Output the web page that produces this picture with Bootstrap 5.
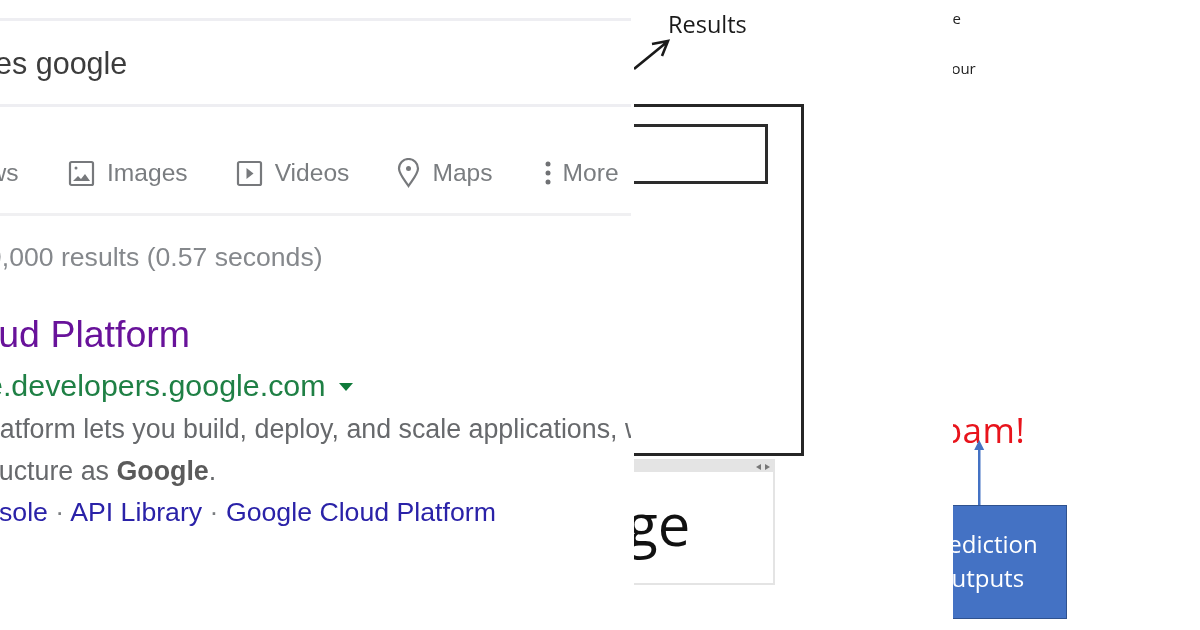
<!DOCTYPE html>
<html lang="en">
<head>
<meta charset="UTF-8">
<title>Spam prediction</title>
<link href="https://cdn.jsdelivr.net/npm/bootstrap@5.3.0/dist/css/bootstrap.min.css" rel="stylesheet">
<style>
    html, body { width: 1200px; height: 630px; overflow: hidden; background: #fff; }
    .shot { width: 631px; height: 630px; overflow: hidden; padding-top: 18px; margin-right: 3px; font-family: "Liberation Sans", Arial, sans-serif; white-space: nowrap; filter: blur(.7px); }
    .shot-line { border-top: 3px solid #eeeef2; }
    .search-row { height: 83px; line-height: 84px; font-size: 30.5px; color: #3c3c3c; margin-left: -166px; }
    .tabs-row { height: 112px; border-top: 3px solid #eeeef2; border-bottom: 3px solid #f0f0f2; color: #7a7d80; font-size: 24.6px; padding-top: 48px; }
    .tab-news { margin-left: -43px; width: 63px; }
    .tab-item { gap: 12px; }
    .tab-images { margin-left: 48px; }
    .tab-videos { margin-left: 48px; }
    .tab-maps { margin-left: 48px; }
    .tab-more { margin-left: 52px; }
    .count { margin: 27px 0 0 -13px; font-size: 26.6px; color: #85888c; line-height: 28px; }
    .res-title { margin: 41px 0 0 -58px; font-size: 37.5px; line-height: 44px; color: #68129a; }
    .res-url { margin: 11px 0 0 -14px; font-size: 30.4px; line-height: 36px; color: #1f8045; }
    .res-caret { display: inline-block; margin-left: 13px; vertical-align: 5px; border: 7px solid transparent; border-top: 8px solid #0f7a3a; border-bottom: 0; }
    .res-text { font-size: 26.8px; line-height: 42px; color: #67696c; }
    .res-text b { color: #5a5a5a; }
    .text-a { margin: 5px 0 0 -24px; }
    .text-b { margin-left: -31px; }
    .res-links { margin: 0 0 0 -50px; font-size: 26.7px; line-height: 40px; color: #2a22a8; }
    .res-links i { font-style: normal; color: #7a7d80; }

    .sketch { width: 319px; height: 630px; overflow: hidden; font-family: "Open Sans", sans-serif; filter: blur(.4px); }
    .res-label { position: absolute; left: 34px; top: 8px; font-size: 23.5px; line-height: 32px; color: #1a1a1a; }
    .sketch-arrow { position: absolute; left: 0; top: 0; }
    .outer-box { position: absolute; left: -30px; top: 104px; width: 200px; height: 352px; border: 3px solid #262626; }
    .inner-box { position: absolute; left: -30px; top: 124px; width: 164px; height: 60px; border: 3px solid #2c2c2c; }
    .msg-pane { position: absolute; left: -30px; top: 459px; width: 171px; height: 126px; border: 2px solid #e4e4e4; border-left: 0; }
    .pane-bar { height: 11px; background: #e4e4e4; padding-right: 3px; gap: 4px; }
    .pane-tri { border: 3px solid transparent; }
    .pane-left { border-right: 5px solid #777; border-left: 0; }
    .pane-right { border-left: 5px solid #777; border-right: 0; }
    .msg-word { margin-left: -150px; font-size: 58px; line-height: 104px; color: #111; white-space: nowrap; }

    .notes { width: 247px; height: 630px; overflow: hidden; font-family: "Open Sans", sans-serif; filter: blur(.3px); }
    .note { position: absolute; font-size: 15px; line-height: 20px; color: #222; white-space: nowrap; }
    .note-the { left: -15px; top: 8px; }
    .note-your { left: -10px; top: 58px; }
    .spam-word { position: absolute; left: -32px; top: 405px; font-size: 35px; line-height: 50px; color: #e8141c; white-space: nowrap; letter-spacing: .5px; }
    .pred-arrow { position: absolute; left: 18px; top: 440px; }
    .pred-box { position: absolute; left: 0; top: 505px; width: 114px; height: 114px; background: #4472c4; border: 1px solid #2f528f; border-left: 0; color: #fff; font-size: 24px; line-height: 34px; padding-top: 21px; white-space: nowrap; }
    .pred-a { margin-left: -29px; }
    .pred-b { margin-left: -16px; }
</style>
</head>
<body>
<div class="d-flex">
    <div class="shot">
        <div class="shot-line"></div>
        <div class="search-row">cloud services google</div>
        <div class="tabs-row d-flex align-items-start">
            <div class="tab-news">News</div>
            <div class="tab-item tab-images d-flex align-items-center">
                <svg width="27" height="27" viewBox="0 0 27 27" fill="none" stroke="#77797c" stroke-width="2.2"><rect x="2" y="2" width="23" height="23" rx="1.5"/><circle cx="8" cy="8" r="1.5" fill="#77797c" stroke="none"/><path d="M5 21l5-5 3 3 4-5 5 7z" fill="#77797c" stroke="none"/></svg>
                <span>Images</span>
            </div>
            <div class="tab-item tab-videos d-flex align-items-center">
                <svg width="27" height="27" viewBox="0 0 27 27" fill="none" stroke="#77797c" stroke-width="2.2"><rect x="2" y="2" width="23" height="23" rx="1.5"/><path d="M10.5 8l7 5.5-7 5.5z" fill="#77797c" stroke="none"/></svg>
                <span>Videos</span>
            </div>
            <div class="tab-item tab-maps d-flex align-items-center">
                <svg width="23" height="30" viewBox="0 0 23 30" fill="none" stroke="#77797c" stroke-width="2.2"><path d="M11.5 28C6 20 2 15.500 2 10.500a9.500 9.500 0 0 1 19 0C21 15.500 17 20 11.500 28z"/><circle cx="11.500" cy="10.500" r="2.500" fill="#77797c" stroke="none"/></svg>
                <span>Maps</span>
            </div>
            <div class="tab-item tab-more d-flex align-items-center">
                <svg width="6" height="24" viewBox="0 0 6 24" fill="#6f7174"><circle cx="3" cy="3" r="2.500"/><circle cx="3" cy="12" r="2.500"/><circle cx="3" cy="21" r="2.500"/></svg>
                <span>More</span>
            </div>
        </div>
        <div class="count">9,000 results (0.57 seconds)</div>
        <div class="res-title">Cloud Platform</div>
        <div class="res-url">e.developers.google.com<span class="res-caret"></span></div>
        <div class="res-text text-a">Platform lets you build, deploy, and scale applications, w</div>
        <div class="res-text text-b">structure as <b>Google</b>.</div>
        <div class="res-links">Console <i>·</i> API Library <i>·</i> Google Cloud Platform</div>
    </div>

    <div class="sketch position-relative">
        <div class="res-label">Results</div>
        <svg class="sketch-arrow" width="60" height="90" viewBox="0 0 60 90" fill="none" stroke="#1a1a1a" stroke-width="2.6">
            <path d="M0 69L33 42M18 44l16-3-6 15"/>
        </svg>
        <div class="outer-box"></div>
        <div class="inner-box"></div>
        <div class="msg-pane">
            <div class="pane-bar d-flex justify-content-end align-items-center">
                <span class="pane-tri pane-left"></span>
                <span class="pane-tri pane-right"></span>
            </div>
            <div class="msg-word">Message</div>
        </div>
    </div>

    <div class="notes position-relative">
        <div class="note note-the">the</div>
        <div class="note note-your">Your</div>
        <div class="spam-word">Spam!</div>
        <svg class="pred-arrow" width="16" height="66" viewBox="0 0 16 66" fill="#4472c4">
            <rect x="7" y="8" width="2.500" height="58"/><path d="M8.200 0l5 10h-10z"/>
        </svg>
        <div class="pred-box">
            <div class="pred-a">Prediction</div>
            <div class="pred-b">outputs</div>
        </div>
    </div>
</div>
<script src="https://cdn.jsdelivr.net/npm/bootstrap@5.3.0/dist/js/bootstrap.bundle.min.js"></script>
</body>
</html>
